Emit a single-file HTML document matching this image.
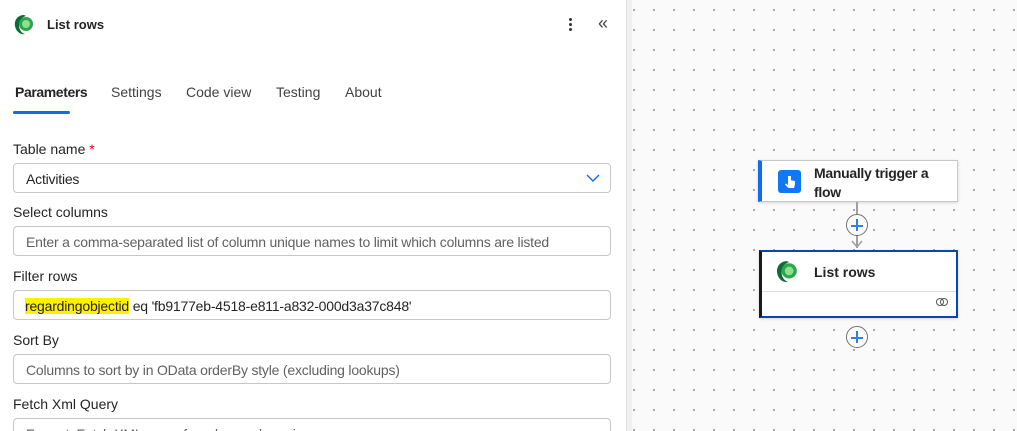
<!DOCTYPE html>
<html style="width:1017px;height:431px;overflow:hidden"><head><style>
*{box-sizing:border-box;margin:0;padding:0}
body{width:1017px;height:431px;overflow:hidden;font-family:"Liberation Sans",sans-serif;background:#fff;position:relative;color:#242424}
.panel{position:absolute;left:0;top:0;width:626px;height:431px;background:#fff;overflow:hidden}
.strip{position:absolute;left:626px;top:0;width:6px;height:431px;background:#f0f0f0;border-left:1px solid #e0e0e0}
.canvas{position:absolute;left:632px;top:0;right:0;bottom:0;background-color:#fafafa;background-image:radial-gradient(circle,#9a9a9a 0.8px,transparent 1.2px);background-size:20px 20px;background-position:-8px 0px}
.t{position:absolute;font-size:14px;white-space:nowrap}
.lbl{position:absolute;left:13px;font-size:14px;color:#242424}
.inp{position:absolute;left:13px;width:598px;height:30px;border:1px solid #c8c8c8;border-radius:4px;font-size:14px;color:#616161;padding:7px 12px;white-space:nowrap;letter-spacing:-0.2px}
.card{position:absolute;background:#fff;border:1px solid #c8c8c8;box-shadow:0 1px 3px rgba(0,0,0,.15)}
.plus{position:absolute;width:22px;height:22px;border:1px solid #707070;border-radius:50%;background:#fff}
.plus:before{content:"";position:absolute;left:4px;top:9.5px;width:12px;height:2px;background:#2f7bf0}
.plus:after{content:"";position:absolute;left:9px;top:4px;width:2px;height:12px;background:#2f7bf0}
</style></head><body>
<div class="panel">
<svg style="position:absolute;left:13px;top:14px" width="22" height="22" viewBox="0 0 22 22"><path d="M11 1C5 1 1 6 2 12c1 6 6 9 10 8-4-1-6-5-6-9 0-4 3-8 7-9z" fill="#0b6b35"/><circle cx="13" cy="10" r="7" fill="#2fa44f"/><circle cx="13" cy="10" r="4" fill="#8ee08c"/></svg>
<div class="t" style="left:47px;top:17px;font-weight:bold;font-size:13px">List rows</div>
<div style="position:absolute;left:569px;top:18px;width:3px;height:3px;background:#333;border-radius:50%;box-shadow:0 5px 0 #333,0 10px 0 #333"></div>
<div class="t" style="left:598px;top:13px;font-size:18px;color:#444">«</div>
<div class="t" style="left:15px;top:84px;font-weight:bold;color:#242424;letter-spacing:-0.4px">Parameters</div>
<div style="position:absolute;left:13px;top:111px;width:57px;height:3px;background:#0f6cf0;border-radius:2px"></div>
<div class="t" style="left:111px;top:84px;color:#424242">Settings</div>
<div class="t" style="left:186px;top:84px;color:#424242">Code view</div>
<div class="t" style="left:276px;top:84px;color:#424242">Testing</div>
<div class="t" style="left:345px;top:84px;color:#424242">About</div>
<div class="lbl" style="top:141px">Table name <span style="color:#c50f1f">*</span></div>
<div class="inp" style="top:163px;color:#242424">Activities<svg style="position:absolute;right:10px;top:9px" width="14" height="10" viewBox="0 0 14 10"><path d="M1 2l6 6 6-6" stroke="#0f6cf0" stroke-width="1.4" fill="none"/></svg></div>
<div class="lbl" style="top:204px">Select columns</div>
<div class="inp" style="top:226px">Enter a comma-separated list of column unique names to limit which columns are listed</div>
<div class="lbl" style="top:268px">Filter rows</div>
<div class="inp" style="top:290px;color:#242424"><span style="background:#fff000;margin-left:-1px">regardingobjectid</span> eq 'fb9177eb-4518-e811-a832-000d3a37c848'</div>
<div class="lbl" style="top:332px">Sort By</div>
<div class="inp" style="top:354px">Columns to sort by in OData orderBy style (excluding lookups)</div>
<div class="lbl" style="top:396px">Fetch Xml Query</div>
<div class="inp" style="top:418px">Format: Fetch XML query for advanced queries</div>
</div>
<div class="strip"></div>
<div class="canvas"></div>
<div class="card" style="left:758px;top:160px;width:200px;height:42px;border-left:4px solid #0f6cf0">
<div style="position:absolute;left:16px;top:9px;width:23px;height:23px;background:#0f78f2;border-radius:3px"><svg width="23" height="23" viewBox="0 0 23 23"><path d="M10 6v9l-2-1.5-1 1 3.5 3.5h5.5l1-4v-3l-4-.8V6z" fill="#fff"/></svg></div>
<div class="t" style="left:52px;top:3px;font-weight:bold;line-height:19px;letter-spacing:-0.3px">Manually trigger a<br>flow</div>
</div>
<div style="position:absolute;left:856px;top:202px;width:2px;height:46px;background:#a0a0a0"></div>
<svg style="position:absolute;left:851px;top:240px" width="12" height="9"><path d="M1 1l5 6 5-6" stroke="#a0a0a0" stroke-width="1.5" fill="none"/></svg>
<div class="plus" style="left:846px;top:214px"></div>
<div class="card" style="left:759px;top:250px;width:199px;height:68px;border:2px solid #0a46b0;border-left:3px solid #1a1a1a">
<svg style="position:absolute;left:13px;top:8px" width="24" height="24" viewBox="0 0 22 22"><path d="M11 1C5 1 1 6 2 12c1 6 6 9 10 8-4-1-6-5-6-9 0-4 3-8 7-9z" fill="#0b6b35"/><circle cx="13" cy="10" r="7" fill="#2fa44f"/><circle cx="13" cy="10" r="4" fill="#8ee08c"/></svg>
<div class="t" style="left:52px;top:12px;font-weight:bold">List rows</div>
<div style="position:absolute;left:0;right:0;top:39px;height:1px;background:#ddd"></div>
<svg style="position:absolute;left:173px;top:44px" width="14" height="12" viewBox="0 0 14 12"><circle cx="5" cy="6" r="3.5" stroke="#555" fill="none"/><circle cx="9" cy="6" r="3.5" stroke="#555" fill="none"/></svg>
</div>
<div class="plus" style="left:846px;top:326px"></div>
</body></html>
